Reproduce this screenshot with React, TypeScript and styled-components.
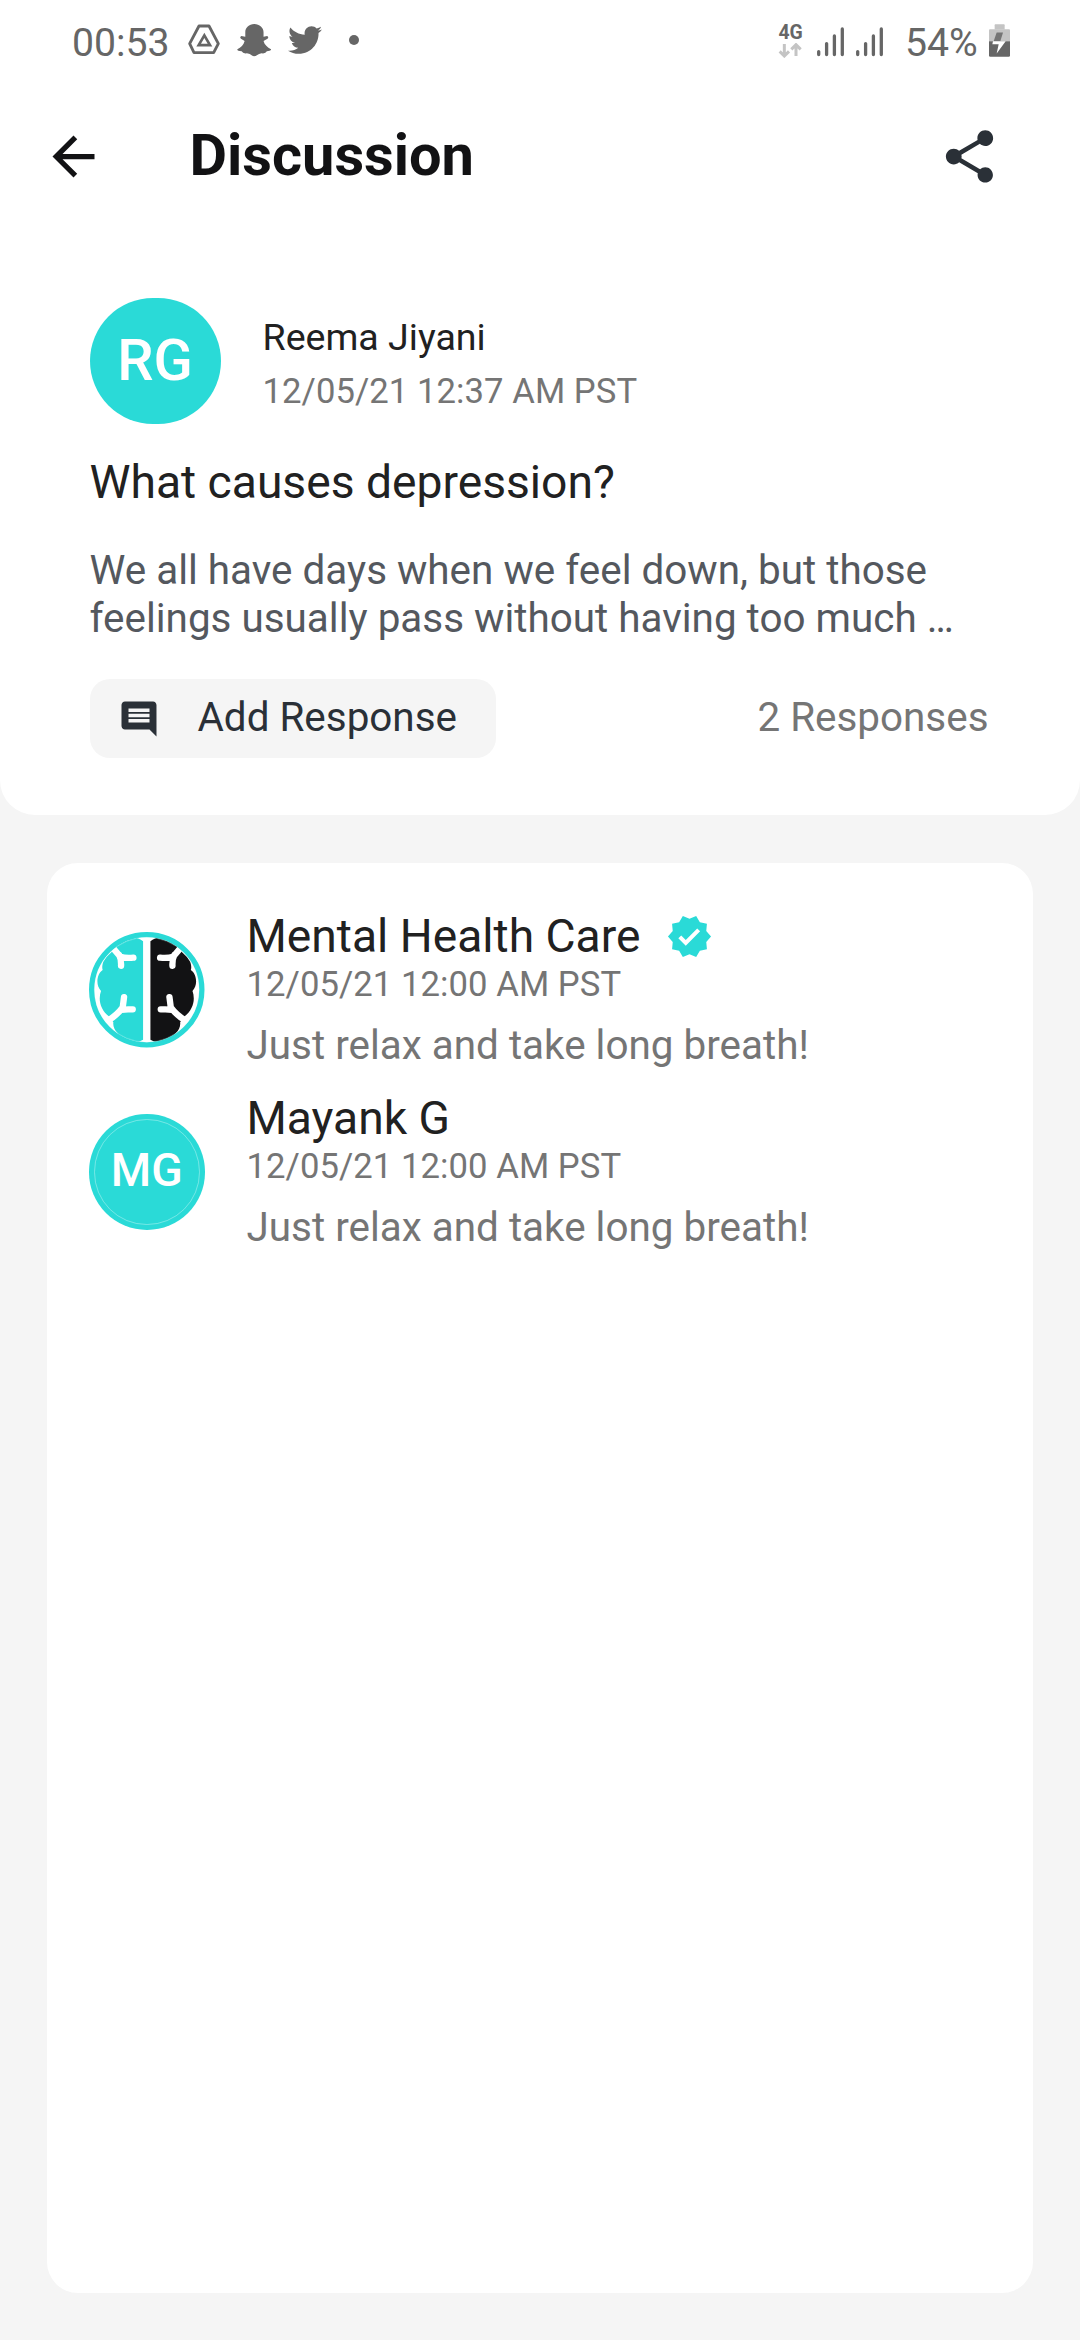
import React from "react";
import styled, { createGlobalStyle } from "styled-components";
import { MdArrowBack, MdComment, MdShare, MdVerified } from "react-icons/md";
import { FaTwitter } from "react-icons/fa";

const color = {
  teal: "#2adad7",
  surface: "#ffffff",
  page: "#f5f5f5",
  title: "#121214",
  text: "#212121",
  muted: "#757575",
  body: "#54585e",
  slate: "#2a3037",
  status: "#666666",
  statusLight: "#c4c4c4",
};

const GlobalStyle = createGlobalStyle`
  *, *::before, *::after { box-sizing: border-box; }
  body {
    margin: 0;
    background: ${color.page};
    font-family: Roboto, "Noto Sans", sans-serif;
  }
  svg { display: block; flex: none; }
`;

const Screen = styled.div`
  display: flex;
  flex-direction: column;
  width: 1080px;
  height: 2340px;
  background: ${color.page};
`;

const TopPanel = styled.section`
  display: flex;
  flex-direction: column;
  height: 815px;
  background: ${color.surface};
  border-radius: 0 0 35px 35px;
`;

const StatusBar = styled.div`
  display: flex;
  align-items: flex-start;
  justify-content: space-between;
  height: 85px;
  padding: 0 70px 0 72px;
  color: ${color.status};
`;

const StatusGroup = styled.div`
  display: flex;
  align-items: flex-start;
`;

const StatusText = styled.span`
  font-size: 39.2px;
  line-height: 86px;
`;

const StatusSlot = styled.span<{ $top: number; $left: number }>`
  display: block;
  margin-top: ${(p) => p.$top}px;
  margin-left: ${(p) => p.$left}px;
`;

const Dot = styled.span`
  display: block;
  width: 10px;
  height: 10px;
  margin: 35px 0 0 27.5px;
  border-radius: 50%;
  background: ${color.status};
`;

const Network = styled.div`
  display: flex;
  flex-direction: column;
  width: 25px;
  padding-top: 23px;
`;

const NetworkLabel = styled.span`
  font-size: 19.4px;
  font-weight: 700;
  line-height: 20px;
`;

const AppBar = styled.header`
  display: flex;
  align-items: center;
  height: 142px;
  padding: 0 79px 0 42px;
`;

const BackButton = styled.button`
  padding: 0;
  border: 0;
  background: none;
  color: ${color.title};
`;

const ShareButton = styled(BackButton)`
  margin-left: auto;
  color: ${color.slate};
`;

const Title = styled.h1`
  margin: -2px 0 0 84.5px;
  font-size: 57.75px;
  font-weight: 700;
  line-height: 68px;
  color: ${color.title};
`;

const Post = styled.article`
  display: flex;
  flex-direction: column;
  padding: 71px 91.5px 0 89.5px;
`;

const Author = styled.div`
  display: flex;
  gap: 42px;
  height: 126px;
`;

const AuthorAvatar = styled.div`
  display: flex;
  align-items: center;
  justify-content: center;
  width: 131px;
  height: 126px;
  padding-bottom: 2px;
  border-radius: 66px;
  background: ${color.teal};
  color: #fff;
  font-size: 57.75px;
  font-weight: 500;
`;

const AuthorText = styled.div`
  display: flex;
  flex-direction: column;
  gap: 12px;
  padding-top: 17px;
`;

const AuthorName = styled.span`
  font-size: 37.54px;
  line-height: 44px;
  color: ${color.text};
`;

const Timestamp = styled.time`
  font-size: 34.65px;
  line-height: 40px;
  letter-spacing: 0.06px;
  color: ${color.muted};
`;

const Question = styled.h2`
  margin: 31px 0 0;
  font-size: 46.2px;
  font-weight: 400;
  line-height: 54px;
  color: ${color.text};
`;

const Excerpt = styled.p`
  margin: 38px 0 0;
  font-size: 40.42px;
  line-height: 48px;
  color: ${color.body};
  white-space: pre-line;
`;

const PostFooter = styled.div`
  display: flex;
  align-items: center;
  justify-content: space-between;
  margin-top: 36px;
`;

const ResponseButton = styled.button`
  display: flex;
  align-items: center;
  gap: 38px;
  width: 406.5px;
  height: 79px;
  padding: 0 0 0 28px;
  border: 0;
  border-radius: 20px;
  background: ${color.page};
  color: ${color.slate};
  font: 400 40.42px/47px Roboto, sans-serif;
`;

const ButtonLabel = styled.span`
  margin-top: -2px;
`;

const ResponseCount = styled.span`
  margin-top: -2px;
  font-size: 40.42px;
  line-height: 47px;
  color: ${color.muted};
`;

const ResponseCard = styled.section`
  display: flex;
  flex: 1;
  flex-direction: column;
  margin: 48px 47px 47px;
  padding: 46px 42px 0;
  border-radius: 31px;
  background: ${color.surface};
`;

const Response = styled.article`
  display: flex;
  gap: 42px;
  height: 182px;
`;

const ResponseAvatar = styled.div`
  flex: none;
  width: 115.5px;
  height: 115.5px;
  margin-top: 23px;
`;

const InitialsAvatar = styled(ResponseAvatar)`
  padding: 5px;
  border-radius: 50%;
  background: ${color.teal};
`;

const Initials = styled.div`
  display: flex;
  align-items: center;
  justify-content: center;
  width: 100%;
  height: 100%;
  padding-bottom: 4px;
  border: 1px solid rgba(255, 255, 255, 0.35);
  border-radius: 50%;
  color: #fff;
  font-size: 46.2px;
  font-weight: 500;
`;

const ResponseBody = styled.div`
  display: flex;
  flex-direction: column;
`;

const NameRow = styled.div`
  display: flex;
  align-items: center;
  gap: 26px;
  height: 54px;
  margin-bottom: 1px;
`;

const ResponderName = styled.span`
  font-size: 46.2px;
  line-height: 54px;
  color: ${color.text};
`;

const Message = styled.p`
  margin: 18px 0 0;
  font-size: 40.42px;
  line-height: 47px;
  color: ${color.muted};
`;

const DriveIcon = () => (
  <svg width="32" height="31" viewBox="414 71 96 93" fill="none" stroke={color.status} strokeLinejoin="round">
    <path d="M447 77H477L505 130 491 157H432L419 130Z" strokeWidth="8.5" />
    <path d="M463 105L480 134.5H446Z" strokeWidth="8" strokeLinejoin="miter" />
  </svg>
);

const GhostIcon = () => (
  <svg width="34.5" height="33" viewBox="560 72 104 99" fill={color.status}>
    <path d="M612 72C596 72 585 83 585 97V110L573 108Q567 112 572 116L583 123C580 135 572 142 561 148Q560 153 574 154Q578 162 590 160Q600 162 604 166Q612 172 620 166Q626 161 634 160Q646 162 650 154Q664 153 663 148C652 142 643 135 640 123L652 116Q657 112 651 108L640 110V97C640 83 628 72 612 72Z" />
  </svg>
);

const DataArrows = () => (
  <svg width="24" height="15" viewBox="82 132 72 45" fill="none" stroke={color.statusLight} strokeWidth="9">
    <path d="M101 135V170M87 157L101 171 115 157M136 171V138M122 151L136 137 150 151" />
  </svg>
);

const SignalIcon = () => (
  <svg width="27" height="30" viewBox="0 0 27 30" stroke={color.status} strokeWidth="3.3" strokeLinecap="round">
    <path d="M1.7 24.6V27.6M9.6 16.6V27.6M17.4 9V27.6M25.3 1.9V27.6" />
  </svg>
);

const BatteryIcon = () => (
  <svg width="21" height="33" viewBox="714 72 63 98">
    <path d="M733 72H759Q761 72 761 75V88H731V75Q731 72 733 72Z" fill={color.statusLight} />
    <path d="M717 87H774Q777 87 777 90V123H714V90Q714 87 717 87Z" fill={color.statusLight} />
    <path d="M714 123H777V166Q777 170 773 170H718Q714 170 714 166Z" fill={color.status} />
    <path d="M737 97H756L748 123H728Z" fill={color.muted} />
    <path d="M726 123H764L737 160 743 132H724Z" fill="#fff" />
  </svg>
);

const lobe =
  "M189 64C180 56 168 52 155 53L108 58 95 96Q78 110 70 125C66 135 66 145 68 150C50 162 46 195 63 213C54 238 60 268 88 290L100 306C98 318 104 330 112 338L140 372C165 370 180 364 189 359Z";
const folds = "M92 76L121 110Q135 115 160 113M117 104Q124 118 123 137M86 300Q112 284 128 262L132 231M124 269Q136 267 158 268";

const BrainAvatar = () => (
  <svg width="115.5" height="115.5" viewBox="27 36 346 346">
    <defs>
      <clipPath id="brain-disc">
        <circle cx="200" cy="209" r="158" />
      </clipPath>
    </defs>
    <circle cx="200" cy="209" r="165" fill="#fff" />
    <g clipPath="url(#brain-disc)">
      <path d={lobe} fill={color.teal} />
      <path d={lobe} fill={color.title} transform="translate(400 0) scale(-1 1)" />
      <g fill="none" stroke="#fff" strokeWidth="19" strokeLinecap="round" strokeLinejoin="round">
        <path d={folds} />
        <path d={folds} transform="translate(400 0) scale(-1 1)" />
      </g>
    </g>
    <circle cx="200" cy="209" r="165" fill="none" stroke={color.teal} strokeWidth="16" />
    <circle cx="200" cy="209" r="157" fill="none" stroke="#fff" strokeOpacity="0.35" strokeWidth="2" />
  </svg>
);

type ResponseData = { name: string; initials?: string; verified?: boolean; time: string; message: string };

const responses: ResponseData[] = [
  { name: "Mental Health Care", verified: true, time: "12/05/21 12:00 AM PST", message: "Just relax and take long breath!" },
  { name: "Mayank G", initials: "MG", time: "12/05/21 12:00 AM PST", message: "Just relax and take long breath!" },
];

export default function App() {
  return (
    <Screen>
      <GlobalStyle />
      <TopPanel>
        <StatusBar>
          <StatusGroup>
            <StatusText>00:53</StatusText>
            <StatusSlot $top={23.7} $left={18.4}><DriveIcon /></StatusSlot>
            <StatusSlot $top={24} $left={16.7}><GhostIcon /></StatusSlot>
            <StatusSlot $top={23} $left={16.4}><FaTwitter size={34} /></StatusSlot>
            <Dot />
          </StatusGroup>
          <StatusGroup>
            <Network>
              <NetworkLabel>4G</NetworkLabel>
              <DataArrows />
            </Network>
            <StatusSlot $top={26.5} $left={13.7}><SignalIcon /></StatusSlot>
            <StatusSlot $top={26.5} $left={12}><SignalIcon /></StatusSlot>
            <StatusSlot $top={0} $left={21.8}><StatusText>54%</StatusText></StatusSlot>
            <StatusSlot $top={24} $left={11.3}><BatteryIcon /></StatusSlot>
          </StatusGroup>
        </StatusBar>
        <AppBar>
          <BackButton aria-label="Back"><MdArrowBack size={63} /></BackButton>
          <Title>Discussion</Title>
          <ShareButton aria-label="Share"><MdShare size={63} /></ShareButton>
        </AppBar>
        <Post>
          <Author>
            <AuthorAvatar>RG</AuthorAvatar>
            <AuthorText>
              <AuthorName>Reema Jiyani</AuthorName>
              <Timestamp>12/05/21 12:37 AM PST</Timestamp>
            </AuthorText>
          </Author>
          <Question>What causes depression?</Question>
          <Excerpt>{"We all have days when we feel down, but those\nfeelings usually pass without having too much …"}</Excerpt>
          <PostFooter>
            <ResponseButton>
              <MdComment size={42} />
              <ButtonLabel>Add Response</ButtonLabel>
            </ResponseButton>
            <ResponseCount>2 Responses</ResponseCount>
          </PostFooter>
        </Post>
      </TopPanel>
      <ResponseCard>
        {responses.map((r) => (
          <Response key={r.name}>
            {r.initials ? (
              <InitialsAvatar><Initials>{r.initials}</Initials></InitialsAvatar>
            ) : (
              <ResponseAvatar><BrainAvatar /></ResponseAvatar>
            )}
            <ResponseBody>
              <NameRow>
                <ResponderName>{r.name}</ResponderName>
                {r.verified && <MdVerified size={47} color={color.teal} />}
              </NameRow>
              <Timestamp>{r.time}</Timestamp>
              <Message>{r.message}</Message>
            </ResponseBody>
          </Response>
        ))}
      </ResponseCard>
    </Screen>
  );
}
